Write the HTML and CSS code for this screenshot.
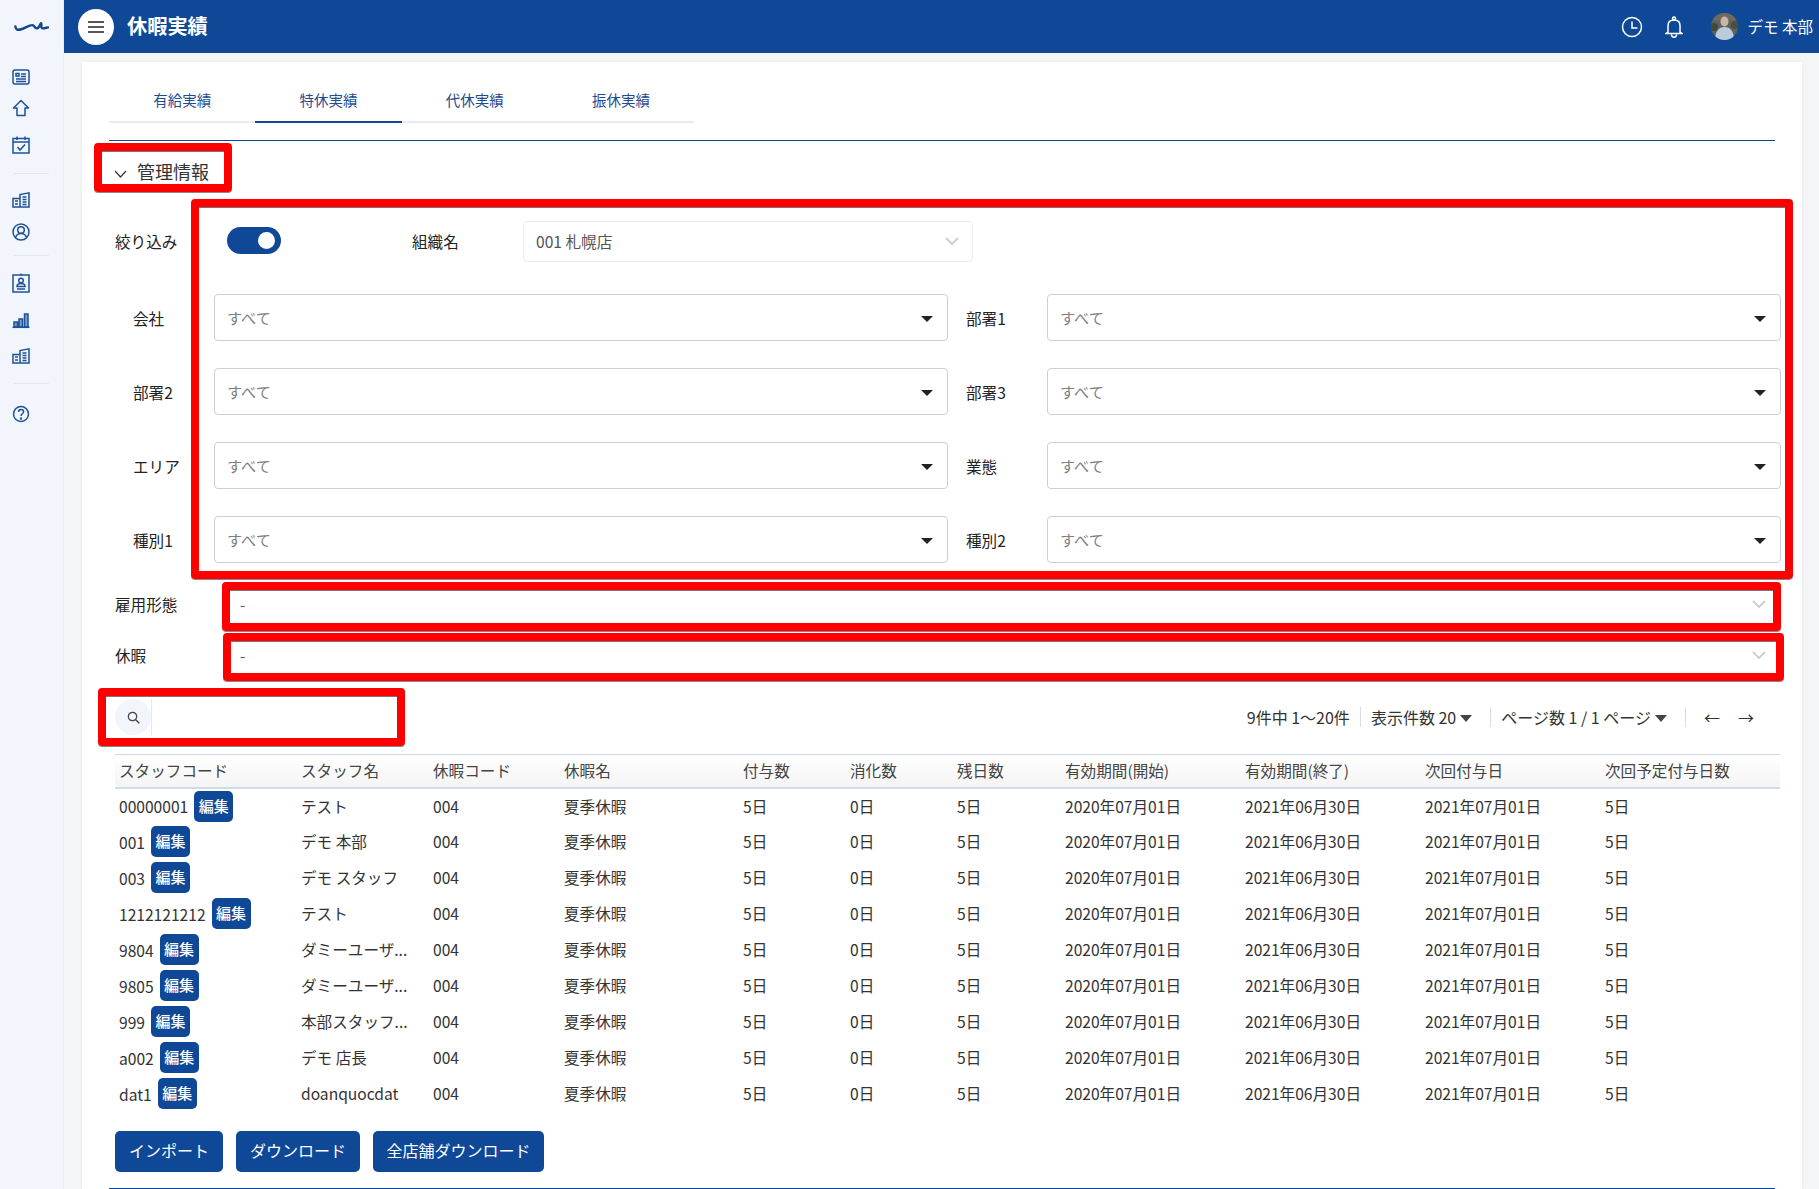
FILE: index.html
```html
<!DOCTYPE html>
<html lang="ja">
<head>
<meta charset="utf-8">
<title>休暇実績</title>
<link rel="stylesheet" href="styles.css">
</head>
<body>
<div class="app">
  <aside class="sidebar">
    <div class="logo">
      <svg width="35" height="13" viewBox="0 0 38 14"><path d="M1.500 7C2 11 4 11 8 10S17 5 20 5.500 22 9.500 25 9 28.500 3 29.500 3.500 28.500 9 31 9 36 8 37 8" fill="none" stroke="#10478f" stroke-width="2.600" stroke-linecap="round"/></svg>
    </div>
    <nav class="nav">
      <span class="nav-item"><svg class="ni" viewBox="0 0 18 16"><rect x="1" y="1" width="16" height="14" rx="2"/><path d="M4 4.500h3v2.500H4zM9 5h5M9 7.500h5M4 10h10M4 12.500h10"/></svg></span>
      <span class="nav-item"><svg class="ni" viewBox="0 0 18 18"><path d="M9 1.500 1.500 9H5v7.500h8V9h3.500z" stroke-linejoin="round"/></svg></span>
      <span class="nav-item"><svg class="ni" viewBox="0 0 18 18"><rect x="1" y="2.500" width="16" height="14.500"/><path d="M1 6h16M5 .5v3.500M13 .5v3.500M5.500 11l2.500 3 5-5.500"/></svg></span>
      <span class="nav-sep"></span>
      <span class="nav-item"><svg class="ni" viewBox="0 0 18 16"><path d="M1 15V6.500h7V15zM8 15V2.500L17 .8V15zM1 15h16M3 9h3M3 12h3M10.500 5h4M10.500 7.500h4M10.500 10h4M10.500 12.500h4"/></svg></span>
      <span class="nav-item"><svg class="ni" viewBox="0 0 18 18"><circle cx="9" cy="9" r="8"/><circle cx="9" cy="7" r="3.300"/><path d="M3.500 14.500c1-3 3-4 5.500-4s4.500 1 5.500 4"/></svg></span>
      <span class="nav-sep"></span>
      <span class="nav-item"><svg class="ni tall" viewBox="0 0 18 20"><rect x="1" y="2" width="16" height="17"/><path d="M9 .5v2"/><circle cx="9" cy="7.500" r="2.300"/><path d="M5 13.500c0-2 2-3 4-3s4 1 4 3zM5 16h8"/></svg></span>
      <span class="nav-item"><svg class="ni" viewBox="0 0 18 16"><path d="M.5 15.300h17"/><path class="fill" d="M2 10h3.500v5H2zM7 7h3.500v8H7zM12.500 2H16v13h-3.500z"/></svg></span>
      <span class="nav-item"><svg class="ni" viewBox="0 0 18 16"><path d="M1 15V6.500h7V15zM8 15V2.500L17 .8V15zM1 15h16M3 9h3M3 12h3M10.500 5h4M10.500 7.500h4M10.500 10h4M10.500 12.500h4"/></svg></span>
      <span class="nav-sep"></span>
      <span class="nav-item"><svg class="ni" viewBox="0 0 18 18"><circle cx="9" cy="9" r="7.500"/><path d="M6.500 7c0-1.500 1.200-2.500 2.600-2.500s2.500 1 2.500 2.300c0 2-2.600 2-2.600 4.200"/><circle cx="9" cy="13.500" r=".5"/></svg></span>
    </nav>
  </aside>
  <div class="main">
    <header class="topbar">
      <button class="menu-btn" type="button" aria-label="menu">
        <svg width="16" height="12" viewBox="0 0 16 12"><path d="M0 1h16M0 6h16M0 11h16" stroke="#222" stroke-width="1.600"/></svg>
      </button>
      <h1 class="page-title">休暇実績</h1>
      <div class="top-right">
        <svg class="clock" width="22" height="22" viewBox="0 0 22 22"><circle cx="11" cy="11" r="9.500"/><path d="M11 5.500V12h5.500"/></svg>
        <svg class="bell" width="18" height="22" viewBox="0 0 18 22"><circle cx="9" cy="2.500" r="1.500"/><path d="M3 16V9.500C3 6 5.500 4 9 4s6 2 6 5.500V16l2 1.500H1zM6.500 18.500c0 3.500 5 3.500 5 0"/></svg>
        <svg class="avatar" width="27" height="27" viewBox="0 0 27 27">
          <rect width="27" height="27" fill="#5d6358"/>
          <rect width="27" height="7" fill="#6f6a5e"/>
          <circle cx="3" cy="14" r="4" fill="#3f4a3b"/>
          <circle cx="24" cy="12" r="4" fill="#45503f"/>
          <ellipse cx="13.500" cy="8.500" rx="4" ry="5" fill="#c9b6a4"/>
          <path d="M4 27c0-9 4-13 9.500-13S23 18 23 27z" fill="#b9cbdc"/>
        </svg>
        <span class="user-name">デモ 本部</span>
      </div>
    </header>
    <main class="content">
      <section class="card">
        <div class="tabs">
          <a class="tab">有給実績</a>
          <a class="tab active">特休実績</a>
          <a class="tab">代休実績</a>
          <a class="tab">振休実績</a>
        </div>
        <div class="rule"></div>
        <h2 class="section-title">
          <svg width="13" height="8" viewBox="0 0 13 8"><path d="M1 1l5.500 6L12 1" fill="none" stroke="#333" stroke-width="1.200"/></svg>
          <span>管理情報</span>
        </h2>

        <div class="toggle-row">
          <span class="label toggle-label">絞り込み</span>
          <span class="toggle"><span class="knob"></span></span>
          <span class="label org-label">組織名</span>
          <div class="select soft org-select">
            <span>001 札幌店</span>
            <svg class="chev" width="14" height="8" viewBox="0 0 14 8"><path d="M1 1l6 6 6-6"/></svg>
          </div>
        </div>

        <div class="filter-grid">
          <span class="label field-label">会社</span>
          <div class="select"><span>すべて</span><i class="caret"></i></div>
          <span class="label field-label">部署1</span>
          <div class="select"><span>すべて</span><i class="caret"></i></div>
          <span class="label field-label">部署2</span>
          <div class="select"><span>すべて</span><i class="caret"></i></div>
          <span class="label field-label">部署3</span>
          <div class="select"><span>すべて</span><i class="caret"></i></div>
          <span class="label field-label">エリア</span>
          <div class="select"><span>すべて</span><i class="caret"></i></div>
          <span class="label field-label">業態</span>
          <div class="select"><span>すべて</span><i class="caret"></i></div>
          <span class="label field-label">種別1</span>
          <div class="select"><span>すべて</span><i class="caret"></i></div>
          <span class="label field-label">種別2</span>
          <div class="select"><span>すべて</span><i class="caret"></i></div>
        </div>

        <div class="wide-row first">
          <span class="label wide-label">雇用形態</span>
          <div class="select plain"><span>-</span><svg class="chev" width="14" height="8" viewBox="0 0 14 8"><path d="M1 1l6 6 6-6"/></svg></div>
        </div>
        <div class="wide-row second">
          <span class="label wide-label">休暇</span>
          <div class="select plain"><span>-</span><svg class="chev" width="14" height="8" viewBox="0 0 14 8"><path d="M1 1l6 6 6-6"/></svg></div>
        </div>

        <div class="tools">
          <div class="search">
            <span class="search-ico"><svg width="13" height="13" viewBox="0 0 13 13"><circle cx="5.500" cy="5.500" r="4.200" fill="none" stroke="#444" stroke-width="1.200"/><path d="M8.700 8.700 12.300 12.300" stroke="#444" stroke-width="1.400"/></svg></span>
            <span class="search-field"></span>
          </div>
          <div class="pager">
            <span class="pg first-pg">9件中 1〜20件</span>
            <span class="pg">表示件数 20<i class="caret small"></i></span>
            <span class="pg">ページ数 1 / 1 ページ<i class="caret small"></i></span>
            <span class="pg arrows"><span>←</span><span>→</span></span>
          </div>
        </div>

        <table class="data">
          <colgroup>
            <col class="c1"><col class="c2"><col class="c3"><col class="c4"><col class="c5"><col class="c5"><col class="c7"><col class="c8"><col class="c8"><col class="c8"><col class="c11">
          </colgroup>
          <thead>
            <tr><th>スタッフコード</th><th>スタッフ名</th><th>休暇コード</th><th>休暇名</th><th>付与数</th><th>消化数</th><th>残日数</th><th>有効期間(開始)</th><th>有効期間(終了)</th><th>次回付与日</th><th>次回予定付与日数</th></tr>
          </thead>
          <tbody>
            <tr><td class="code"><div>00000001<a class="edit">編集</a></div></td><td>テスト</td><td>004</td><td>夏季休暇</td><td>5日</td><td>0日</td><td>5日</td><td>2020年07月01日</td><td>2021年06月30日</td><td>2021年07月01日</td><td>5日</td></tr>
            <tr><td class="code"><div>001<a class="edit">編集</a></div></td><td>デモ 本部</td><td>004</td><td>夏季休暇</td><td>5日</td><td>0日</td><td>5日</td><td>2020年07月01日</td><td>2021年06月30日</td><td>2021年07月01日</td><td>5日</td></tr>
            <tr><td class="code"><div>003<a class="edit">編集</a></div></td><td>デモ スタッフ</td><td>004</td><td>夏季休暇</td><td>5日</td><td>0日</td><td>5日</td><td>2020年07月01日</td><td>2021年06月30日</td><td>2021年07月01日</td><td>5日</td></tr>
            <tr><td class="code"><div>1212121212<a class="edit">編集</a></div></td><td>テスト</td><td>004</td><td>夏季休暇</td><td>5日</td><td>0日</td><td>5日</td><td>2020年07月01日</td><td>2021年06月30日</td><td>2021年07月01日</td><td>5日</td></tr>
            <tr><td class="code"><div>9804<a class="edit">編集</a></div></td><td>ダミーユーザ...</td><td>004</td><td>夏季休暇</td><td>5日</td><td>0日</td><td>5日</td><td>2020年07月01日</td><td>2021年06月30日</td><td>2021年07月01日</td><td>5日</td></tr>
            <tr><td class="code"><div>9805<a class="edit">編集</a></div></td><td>ダミーユーザ...</td><td>004</td><td>夏季休暇</td><td>5日</td><td>0日</td><td>5日</td><td>2020年07月01日</td><td>2021年06月30日</td><td>2021年07月01日</td><td>5日</td></tr>
            <tr><td class="code"><div>999<a class="edit">編集</a></div></td><td>本部スタッフ...</td><td>004</td><td>夏季休暇</td><td>5日</td><td>0日</td><td>5日</td><td>2020年07月01日</td><td>2021年06月30日</td><td>2021年07月01日</td><td>5日</td></tr>
            <tr><td class="code"><div>a002<a class="edit">編集</a></div></td><td>デモ 店長</td><td>004</td><td>夏季休暇</td><td>5日</td><td>0日</td><td>5日</td><td>2020年07月01日</td><td>2021年06月30日</td><td>2021年07月01日</td><td>5日</td></tr>
            <tr><td class="code"><div>dat1<a class="edit">編集</a></div></td><td>doanquocdat</td><td>004</td><td>夏季休暇</td><td>5日</td><td>0日</td><td>5日</td><td>2020年07月01日</td><td>2021年06月30日</td><td>2021年07月01日</td><td>5日</td></tr>
          </tbody>
        </table>

        <div class="actions">
          <a class="btn b1">インポート</a>
          <a class="btn b2">ダウンロード</a>
          <a class="btn b3">全店舗ダウンロード</a>
        </div>
        <div class="rule bottom"></div>
      </section>
    </main>
  </div>
</div>
<div class="mark m-title"></div>
<div class="mark m-filter"></div>
<div class="mark m-employ"></div>
<div class="mark m-leave"></div>
<div class="mark m-search"></div>
</body>
</html>
```
FILE: styles.css
```css
* { box-sizing: border-box; }
html, body { margin: 0; height: 100%; overflow: hidden; }
body {
  position: relative;
  font-family: "Noto Sans CJK JP", "Noto Sans", sans-serif;
  font-size: 15.6px;
  color: #333;
  background: #f4f5f7;
}
.app { display: flex; height: 1189px; }

/* sidebar */
.sidebar {
  width: 64px;
  flex: none;
  background: #f2f5fb;
  border-right: 1px solid #e8ebf1;
}
.logo {
  height: 53px;
  margin-bottom: 8px;
  display: flex;
  align-items: center;
  padding-left: 14px;
}
.nav {
  display: grid;
  grid-template-rows: 32px 30px 44px 12px 42px 22px 24px 32px 42px 30px 24px 38px;
}
.nav-item { display: flex; align-items: center; padding-left: 12px; }
.nav-sep { align-self: center; height: 1px; margin: 0 14px; background: #e4e7ee; }
.ni {
  width: 18px;
  height: 18px;
  fill: none;
  stroke: #1c5299;
  stroke-width: 1.500;
  overflow: visible;
}
.ni.tall { height: 20px; }
.ni .fill { fill: #1c5299; fill-opacity: .55; }

/* top bar */
.main { flex: 1; min-width: 0; display: flex; flex-direction: column; }
.topbar {
  height: 53px;
  flex: none;
  background: #0f4897;
  display: flex;
  align-items: center;
  padding-left: 14px;
  color: #fff;
}
.menu-btn {
  width: 36px;
  height: 36px;
  border: 0;
  padding: 0;
  border-radius: 50%;
  background: #fff;
  display: flex;
  align-items: center;
  justify-content: center;
}
.page-title {
  margin: 0 0 0 13px;
  font-size: 20.2px;
  line-height: 1;
  font-weight: 700;
}
.top-right {
  margin-left: auto;
  display: flex;
  align-items: center;
  padding-right: 6px;
}
.clock, .bell { fill: none; stroke: #fff; stroke-width: 1.500; }
.bell { margin-left: 22px; }
.avatar { margin-left: 28px; border-radius: 50%; }
.user-name { margin-left: 10px; padding-bottom: 2px; font-size: 15.5px; }

/* card */
.content { flex: 1; padding: 9px 17px 0 18px; min-height: 0; }
.card {
  height: 100%;
  background: #fff;
  padding: 15px 21px 0 33px;
  box-shadow: 0 0 4px rgba(0, 0, 0, .05);
}
.tabs { display: flex; margin-left: -6px; }
.tab {
  width: 146.3px;
  height: 46px;
  display: flex;
  align-items: center;
  justify-content: center;
  border-bottom: 2px solid #e8ebf3;
  color: #1f4d8f;
  font-size: 14.5px;
}
.tab.active { border-bottom-color: #0f4897; }
.rule { height: 1px; margin: 17px 6px 0 -6px; background: #0f4897; }
.rule.bottom { margin-top: 16px; }
.section-title {
  margin: 15px 0 0 -1px;
  height: 32px;
  display: flex;
  align-items: center;
  gap: 10px;
  font-size: 18px;
  font-weight: 400;
  color: #333;
}
.section-title svg { margin-top: 3px; }
.section-title span { padding-bottom: 2px; }

/* filters */
.label { color: #222; font-size: 15.6px; }
.toggle-row { display: flex; align-items: center; height: 41px; margin-top: 33px; }
.toggle-label, .org-label, .wide-label { padding-bottom: 2px; }
.toggle-label { width: 112px; }
.toggle {
  width: 54px;
  height: 27px;
  margin-top: -2px;
  border-radius: 14px;
  background: #0f4897;
  display: flex;
  align-items: center;
  justify-content: flex-end;
  padding-right: 6px;
}
.knob { width: 17px; height: 17px; border-radius: 50%; background: #fff; }
.org-label { width: 111px; margin-left: 131px; }

.select {
  height: 100%;
  display: flex;
  align-items: center;
  justify-content: space-between;
  padding: 0 14px 2px 12px;
  background: #fff;
  border: 1px solid #cfcfcf;
  border-radius: 4px;
  color: #808080;
  font-size: 15.2px;
}
.select.soft { width: 450px; border-color: #ebedf0; color: #555; padding: 0 13px 2px 12px; font-size: 15.6px; }
.select.plain { flex: 1; border-color: transparent; color: #555; padding: 0 14px 2px 11px; }
.chev { fill: none; stroke: #cfcfcf; stroke-width: 2; }
.caret {
  width: 0;
  height: 0;
  border-left: 6px solid transparent;
  border-right: 6px solid transparent;
  border-top: 6px solid #222;
  margin-top: 5px;
}
.caret.small { display: inline-block; margin: 0 0 0 4px; border-width: 7px 6.5px 0; border-top-color: #444; vertical-align: 2px; }

.filter-grid {
  display: grid;
  grid-template-columns: 99px 734px 99px 734px;
  grid-auto-rows: 47px;
  row-gap: 27px;
  margin-top: 32px;
}
.field-label { align-self: center; padding-left: 18px; }
.wide-row { display: flex; align-items: center; height: 36px; }
.wide-row.first { margin-top: 24px; }
.wide-row.second { margin-top: 15px; }
.wide-label { width: 113px; }

/* tools */
.tools { display: flex; align-items: center; justify-content: space-between; height: 36px; margin-top: 25px; }
.search { height: 36px; flex: none; width: 270px; display: flex; }
.search-ico {
  width: 36px;
  height: 36px;
  display: flex;
  align-items: center;
  justify-content: center;
  border-radius: 50%;
  background: #f2f5fb;
}
.search-field { flex: 1; border-left: 1px solid #e6e8ec; }
.pager { display: flex; align-items: center; color: #333; font-size: 16px; padding-right: 27px; }
.pg { padding: 0 18px 0 10px; height: 20px; line-height: 20px; display: block; border-left: 1px solid #dcdcdc; white-space: nowrap; }
.first-pg { border-left: 0; padding-right: 10px; }
.arrows { display: flex; gap: 18px; padding-left: 18px; padding-right: 0; }

/* table */
.data { width: 1665px; table-layout: fixed; border-collapse: collapse; margin-top: 19px; }
.c1 { width: 182px; } .c2 { width: 132px; } .c3 { width: 131px; } .c4 { width: 179px; }
.c5 { width: 107px; } .c7 { width: 108px; } .c8 { width: 180px; } .c11 { width: 179px; }
.data th {
  height: 33px;
  padding: 0 4px 2px;
  text-align: left;
  font-weight: 400;
  color: #444;
  white-space: nowrap;
  background: linear-gradient(#fff, #f4f4f4);
  border-top: 1px solid #cfdbea;
  border-bottom: 2px solid #cfdbea;
}
.data td { height: 36px; padding: 0 4px 1px; white-space: nowrap; color: #333; }
.data td.code { padding: 0 4px; }
.code div { display: flex; align-items: center; }
.edit {
  display: block;
  width: 39px;
  height: 31px;
  line-height: 29px;
  margin-left: 6px;
  text-align: center;
  border-radius: 5px;
  background: #0f4897;
  color: #fff;
  font-size: 15px;
  font-weight: 500;
}

/* actions */
.actions { display: flex; gap: 13px; margin-top: 19px; }
.btn {
  height: 41px;
  display: flex;
  align-items: center;
  justify-content: center;
  padding-bottom: 2px;
  border-radius: 5px;
  background: #0f4897;
  color: #fff;
  font-size: 16px;
}
.b1 { width: 108px; }
.b2 { width: 124px; }
.b3 { width: 171px; }

/* red review marks drawn over the screenshot */
.mark { position: absolute; border: 8px solid #f00; border-radius: 4px; box-shadow: inset 0 1px 0 #777, 0 1px 0 #888; }
.m-title { left: 94px; top: 143px; width: 138px; height: 49px; }
.m-filter { left: 191px; top: 199px; width: 1602px; height: 380px; }
.m-employ { left: 222px; top: 582px; width: 1559px; height: 49px; }
.m-leave { left: 223px; top: 633px; width: 1561px; height: 48px; }
.m-search { left: 98px; top: 688px; width: 307px; height: 58px; }
```
